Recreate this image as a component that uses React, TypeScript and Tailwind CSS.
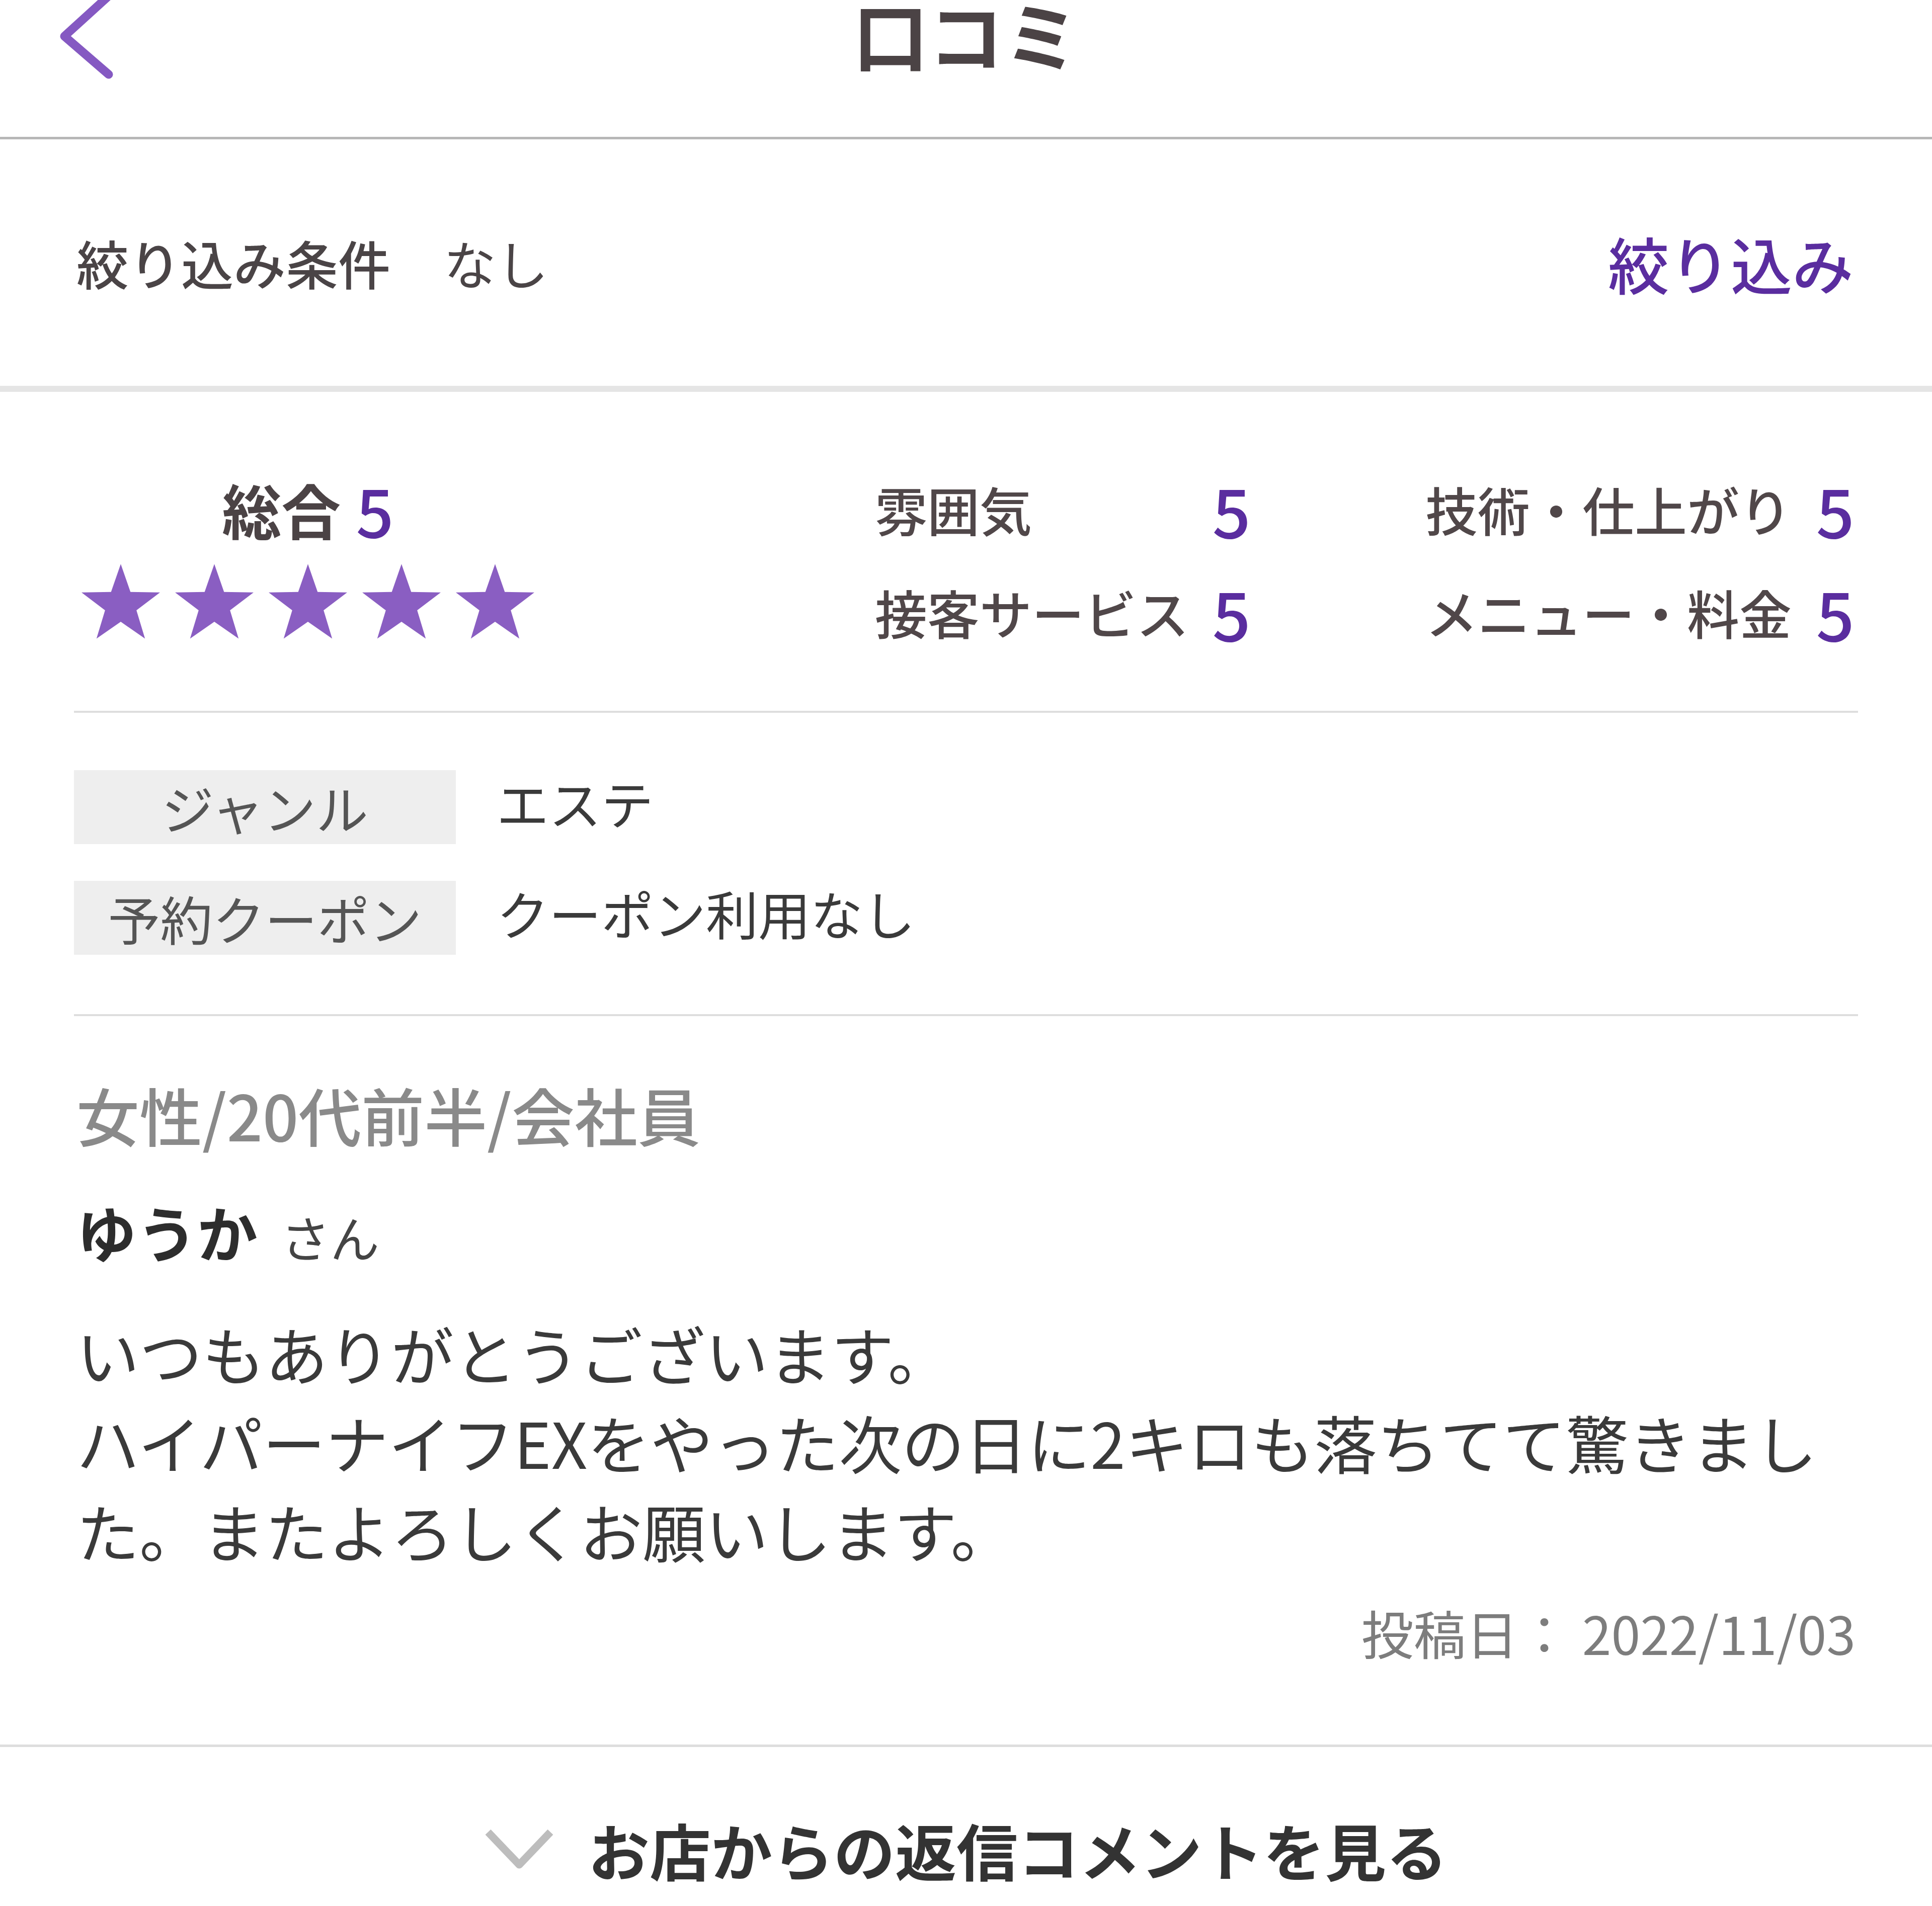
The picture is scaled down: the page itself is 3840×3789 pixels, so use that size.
import React from "react"

const ratings = [
  { label: "雰囲気", score: 5 },
  { label: "技術・仕上がり", score: 5 },
  { label: "接客サービス", score: 5 },
  { label: "メニュー・料金", score: 5 },
]

const details = [
  { label: "ジャンル", value: "エステ" },
  { label: "予約クーポン", value: "クーポン利用なし" },
]

export default function App() {
  return (
    <div className="w-[3840px] h-[3789px] overflow-hidden bg-white font-['Noto_Sans_CJK_JP','Noto_Sans',sans-serif]">
      {/* Header */}
      <header className="grid h-[277px] grid-cols-[1fr_auto_1fr] items-start border-b-[5px] border-[#b7b7b7]">
        <div>
          <BackIcon className="ml-[110px] h-[160px] w-[130px] overflow-visible text-[#8559c2]" />
        </div>
        <h1 className="text-[150px] font-semibold leading-[132px] text-[#4b4345]">口コミ</h1>
        <div />
      </header>

      {/* Filter */}
      <div className="flex h-[490px] items-center justify-between pl-[152px] pr-[156px]">
        <p className="text-[104px] font-medium leading-none text-[#4a4446]">
          絞り込み条件<span className="ml-[106px] font-normal">なし</span>
        </p>
        <button className="text-[122px] font-medium leading-none text-[#5a2d9f]">絞り込み</button>
      </div>
      <div className="h-[12px] bg-[#e5e5e5]" />

      {/* Ratings */}
      <section className="flex items-start pb-[126px] pl-[159px] pr-[154px] pt-[163px]">
        <div className="flex w-[906px] flex-col items-center">
          <div className="flex h-[140px] items-center">
            <span className="text-[118px] font-bold leading-none text-[#4b4345]">総合</span>
            <span className="ml-[30px] text-[132px] font-medium leading-none text-[#5a2d9f]">5</span>
          </div>
          <div className="mt-[35px] flex gap-[22px]">
            {[0, 1, 2, 3, 4].map((i) => (
              <StarIcon key={i} className="h-[156px] w-[164px] text-[#8a5ec2]" />
            ))}
          </div>
        </div>
        <div className="ml-auto grid grid-cols-[747px_853px] gap-x-[347px] gap-y-[65px]">
          {ratings.map((r) => (
            <div key={r.label} className="flex h-[140px] items-center justify-between">
              <span className="text-[104px] font-medium leading-none text-[#504749]">{r.label}</span>
              <span className="text-[134px] font-medium leading-none text-[#5a2d9f]">{r.score}</span>
            </div>
          ))}
        </div>
      </section>

      <div className="mx-[147px] h-[4px] bg-[#dedede]" />

      {/* Genre / coupon */}
      <section className="flex flex-col gap-[73px] px-[147px] pb-[118px] pt-[114px]">
        {details.map((d) => (
          <div key={d.label} className="flex items-start">
            <div className="flex h-[147px] w-[759px] items-center justify-center bg-[#eeeeee] text-[104px] leading-none text-[#555555]">
              {d.label}
            </div>
            <div className="ml-[81px] text-[104px] leading-[127px] text-[#3a3a3a]">{d.value}</div>
          </div>
        ))}
      </section>

      <div className="mx-[147px] h-[4px] bg-[#dedede]" />

      {/* Review */}
      <article className="pb-[158px] pl-[152px] pr-[152px] pt-[115px]">
        <p className="text-[125px] font-medium leading-[160px] text-[#8a8a8a]">女性/20代前半/会社員</p>
        <p className="mt-[78px] flex items-baseline leading-[150px]">
          <span className="text-[120px] font-bold text-[#2d2d2d]">ゆうか</span>
          <span className="ml-[46px] text-[98px] text-[#444444]">さん</span>
        </p>
        <p className="mt-[70px] text-[125px] leading-[176px] text-[#3a3a3a]">
          いつもありがとうございます。
          <br />
          ハイパーナイフEXをやった次の日に2キロも落ちてて驚きまし
          <br />
          た。またよろしくお願いします。
        </p>
        <p className="mt-[50px] text-right text-[104px] leading-[130px] text-[#7d7d7d]">
          投稿日： 2022/11/03
        </p>
      </article>

      <div className="h-[5px] bg-[#dedede]" />

      {/* Shop reply toggle */}
      <button className="flex w-full items-center justify-center pt-[128px]">
        <ChevronDownIcon className="h-[78px] w-[138px] text-[#bdbdbd]" />
        <span className="ml-[68px] text-[122px] font-bold leading-[150px] text-[#333333]">
          お店からの返信コメントを見る
        </span>
      </button>
    </div>
  )
}

// Icons
function BackIcon({ className }: { className?: string }) {
  return (
    <svg className={className} viewBox="0 0 130 160" fill="none" stroke="currentColor" strokeWidth="17" strokeLinecap="round" strokeLinejoin="round">
      <path d="M106 -8 L18 72 L106 148" />
    </svg>
  )
}

function StarIcon({ className }: { className?: string }) {
  return (
    <svg className={className} viewBox="0 0 100 95" fill="currentColor">
      <polygon points="50,2.5 61.76,36.32 97.55,37.05 69.02,58.68 79.39,92.95 50,72.5 20.61,92.95 30.98,58.68 2.45,37.05 38.24,36.32" />
    </svg>
  )
}

function ChevronDownIcon({ className }: { className?: string }) {
  return (
    <svg className={className} viewBox="0 0 138 78" fill="none" stroke="currentColor" strokeWidth="15" strokeLinejoin="round">
      <path d="M7 5 L69 70 L131 5" />
    </svg>
  )
}
